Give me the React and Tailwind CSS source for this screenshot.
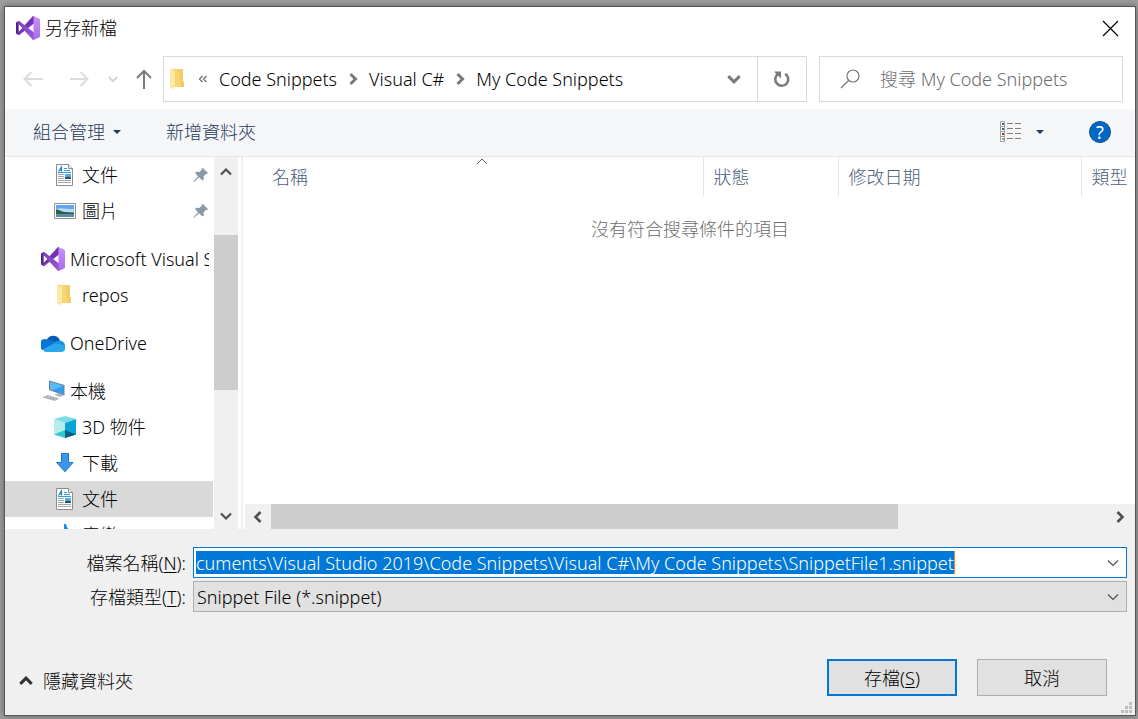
import React from "react";

function VsLogo() {
  return (
    <svg width="24" height="24" viewBox="0 0 24 24" className="shrink-0" aria-hidden="true">
      <defs>
        <linearGradient id="vsPlate" x1="0" y1="0" x2="0" y2="1">
          <stop offset="0" stopColor="#c893fb" />
          <stop offset="1" stopColor="#a66be8" />
        </linearGradient>
        <linearGradient id="vsBand" x1="0" y1="0" x2="1" y2="1">
          <stop offset="0" stopColor="#7a3fb8" />
          <stop offset="1" stopColor="#9a5bd8" />
        </linearGradient>
      </defs>
      <path d="M.6 6Q0 6.300 0 7v10q0 .7.6 1L3 19V5z" fill="#52218a" />
      <path d="M.6 18 3.200 19 18 7.500V0h-1L2.500 15.700z" fill="#7632b5" />
      <path d="M.6 6 3.200 5 18 16.500V24h-1L2.500 8.300z" fill="url(#vsBand)" />
      <path d="M2.600 8.300v7.400L6.200 12z" fill="#fff" />
      <path d="M17.500 0 23 2.500q1 .4 1 1.500v16q0 1.100-1 1.500L17.500 24z" fill="url(#vsPlate)" />
    </svg>
  );
}

function FolderIcon() {
  return (
    <svg width="22" height="22" viewBox="0 0 22 22" className="shrink-0" aria-hidden="true">
      <path d="M3 1h13v12l1 1v5H5z" fill="#f7d673" />
      <path d="M11 1h5v12l1 1v5h-3z" fill="#efc75e" opacity=".6" />
      <path d="M3 1l5 2v14l-1 4.500-4-2z" fill="#ffe9a6" />
    </svg>
  );
}

function DocumentIcon() {
  return (
    <svg width="22" height="22" viewBox="0 0 22 22" className="shrink-0" aria-hidden="true">
      <path d="M2.500.5h12l4 4v17h-16z" fill="#fff" stroke="#8c8c8c" />
      <path d="M14.500.5v4h4" fill="#eee" stroke="#8c8c8c" />
      <path d="M4.500 7.500 7.500 3v4.500M6 6h2" fill="none" stroke="#1583c9" strokeWidth="1.200" />
      <path d="M10 4.500h3M10 6.500h6M4 8.500h13" stroke="#2b9be6" />
      <path d="M4 10.500h6M4 12.500h6M4 14.500h6M4 16.500h13M4 18.500h13" stroke="#a6a6a6" />
      <path d="M11 10h6v5h-6z" fill="#6aa6d6" />
      <path d="M11 13.500l3-1 3 1.200V15h-6z" fill="#24506b" />
    </svg>
  );
}

function PictureIcon() {
  return (
    <svg width="22" height="22" viewBox="0 0 22 22" className="shrink-0" aria-hidden="true">
      <path d="M.5 3.500h21v15H.5z" fill="#fff" stroke="#909497" />
      <path d="M2 5h18v12H2z" fill="#62a8ee" />
      <path d="M2 9c6-2 12 1 18 0v4H2z" fill="#b9dcf6" />
      <path d="M2 9.500c3 0 5 2 9 2.500l9 .5v1.500H2z" fill="#2c5f4c" />
      <path d="M2 14h18v3H2z" fill="#5d8ea3" />
    </svg>
  );
}

function OneDriveIcon() {
  return (
    <svg width="24" height="24" viewBox="0 0 24 24" className="shrink-0" aria-hidden="true">
      <path d="M5.500 9.500a7.200 7.200 0 0 1 13.500 0L14 14z" fill="#0a5cb0" />
      <path d="M6 8.500c2-.3 4 .2 6 1.600l5 3.400L2 19a5.600 5.600 0 0 1 4-10.500z" fill="#0c74d4" />
      <path d="M13 12c2-2 4.500-2.500 6-2.200a5 5 0 0 1 5 4.700L18 16z" fill="#1490e0" />
      <path d="M1.500 18.500 13 12.500l10.800 1.500A4.400 4.400 0 0 1 20 21H5.500Q3 21 1.500 18.500z" fill="#28a8ea" />
    </svg>
  );
}

function ComputerIcon() {
  return (
    <svg width="24" height="24" viewBox="0 0 24 24" className="shrink-0" aria-hidden="true">
      <path d="M8 1.500 23.500 6v10.500L8 11z" fill="#6f7f8c" />
      <path d="M9 2.800 22.500 6.700v8.500L9 10.300z" fill="#2b9df4" />
      <path d="M9 2.800 22.500 6.700 12 11.300 9 10.300z" fill="#5cb8fb" />
      <path d="M13 15.500l5-1.300 5 1.800-4 2z" fill="#aab4bc" />
      <path d="M1 18.200l6-2.200 12 3.300-5 2.700z" fill="#c3cad0" />
      <path d="M3 18.200l11 3M5.500 17.200l11 3" stroke="#8d979f" strokeDasharray="2 1" />
    </svg>
  );
}

function CubeIcon() {
  return (
    <svg width="22" height="22" viewBox="0 0 22 22" className="shrink-0" aria-hidden="true">
      <path d="M0 3 11 0l11 3-11 4z" fill="#7fdbe3" />
      <path d="M0 3l11 4v15L0 18.500z" fill="#b5ecec" />
      <path d="M0 18.500 11 14v8z" fill="#36c7d4" />
      <path d="M22 3 11 7v15l11-3.500z" fill="#0aa3d8" />
      <path d="M22 18.500 11 14v8z" fill="#07607e" />
    </svg>
  );
}

function DownloadIcon() {
  return (
    <svg width="22" height="22" viewBox="0 0 22 22" className="shrink-0" aria-hidden="true">
      <path d="M7.500 1.500h7v9h4.500L11 19.800 2.500 10.500h5z" fill="#3a96e8" stroke="#1f78c8" />
    </svg>
  );
}

function MusicIcon() {
  return (
    <svg width="22" height="22" viewBox="0 0 22 22" className="shrink-0" aria-hidden="true">
      <path d="M10 0h2q1 5 5 7v5q-2-3-5-4v10H6q0-4 4-4z" fill="#1590e8" />
    </svg>
  );
}

function PinIcon() {
  return (
    <svg width="16" height="16" viewBox="0 0 16 16" className="shrink-0" aria-hidden="true">
      <path d="M9.500.8 15.200 6.200 14 7l-1-.2-2.400 2.800.2 3-1.300 1L6 10.200 1 15l-.6-.5L5 9.300 2 6l1-1.200 3.200.2 2.800-2.500-.3-1z" fill="#8a9aa5" />
    </svg>
  );
}

function Chevron({ direction, size = 14, width = 2, color = "#505050" }) {
  const paths = {
    up: "M2 9.500 7 4.500l5 5",
    down: "M2 4.500l5 5 5-5",
    left: "M9.500 2l-5 5 5 5",
    right: "M4.500 2l5 5-5 5",
  };
  return (
    <svg width={size} height={size} viewBox="0 0 14 14" className="shrink-0" aria-hidden="true">
      <path d={paths[direction]} fill="none" stroke={color} strokeWidth={width} />
    </svg>
  );
}

function Arrow({ d, color }) {
  return (
    <svg width="20" height="20" viewBox="0 0 20 20" aria-hidden="true">
      <path d={d} fill="none" stroke={color} strokeWidth="2" />
    </svg>
  );
}

function Caret() {
  return (
    <svg width="8" height="4" viewBox="0 0 8 4" aria-hidden="true">
      <path d="M0 0h8L4 4z" fill="#1e395b" />
    </svg>
  );
}

const groups = [
  [
    { label: "文件", Icon: DocumentIcon, pinned: true },
    { label: "圖片", Icon: PictureIcon, pinned: true },
  ],
  [
    { label: "Microsoft Visual Studio", Icon: VsLogo, root: true },
    { label: "repos", Icon: FolderIcon },
  ],
  [{ label: "OneDrive", Icon: OneDriveIcon, root: true }],
  [
    { label: "本機", Icon: ComputerIcon, root: true },
    { label: "3D 物件", Icon: CubeIcon },
    { label: "下載", Icon: DownloadIcon },
    { label: "文件", Icon: DocumentIcon, selected: true },
    { label: "音樂", Icon: MusicIcon },
  ],
];

function TreeItem({ label, Icon, root, pinned, selected }) {
  return (
    <li>
      <a
        href="#"
        className={
          "flex h-9 items-center overflow-hidden pr-1 text-black " +
          (root ? "gap-[5px] pl-9 " : "gap-[6px] pl-[49px] ") +
          (selected ? "bg-[#d9d9d9]" : "")
        }
      >
        <Icon />
        <span className="min-w-0 flex-1 overflow-hidden whitespace-nowrap">{label}</span>
        {pinned && <PinIcon />}
      </a>
    </li>
  );
}

function TitleBar() {
  return (
    <header className="flex h-[49px] shrink-0 items-center gap-[5px] pb-[7px] pl-[11px] pr-[16px]">
      <VsLogo />
      <h1 className="flex-1">另存新檔</h1>
      <button aria-label="關閉">
        <svg width="17" height="17" viewBox="0 0 17 17" aria-hidden="true">
          <path d="M1 1l15 15M16 1 1 16" stroke="#000" strokeWidth="1.200" />
        </svg>
      </button>
    </header>
  );
}

function AddressRow() {
  return (
    <div className="flex h-[46px] shrink-0 items-stretch pr-[12px]">
      <nav className="flex w-[158px] shrink-0 items-center pl-[18px]">
        <button aria-label="上一頁" className="mr-[26px]">
          <Arrow d="M20 10H2M8.500 3 1.500 10l7 7" color="#dcdcdc" />
        </button>
        <button aria-label="下一頁" className="mr-[18px]">
          <Arrow d="M1 10h17M11.500 3l7 7-7 7" color="#dcdcdc" />
        </button>
        <button aria-label="最近的位置" className="mr-[16px]">
          <Chevron direction="down" size={12} width={2.5} color="#d6d6d6" />
        </button>
        <button aria-label="上一層">
          <Arrow d="M9 20V2M2 9l7-7 7 7" color="#7a7a7a" />
        </button>
      </nav>
      <div className="flex min-w-0 flex-1 items-center border border-[#d9d9d9] pl-[3px]">
        <FolderIcon />
        <span className="ml-[9px] mr-[11px] flex">
          <svg width="10" height="8" viewBox="0 0 10 8" aria-hidden="true">
            <path d="M4.500 1 1.500 4l3 3M8.500 1l-3 3 3 3" fill="none" stroke="#6a6a6a" strokeWidth="1.200" />
          </svg>
        </span>
        <a href="#">Code Snippets</a>
        <span className="mx-[9px]"><Chevron direction="right" width={3} color="#7a7a7a" /></span>
        <a href="#">Visual C#</a>
        <span className="mx-[9px]"><Chevron direction="right" width={3} color="#7a7a7a" /></span>
        <a href="#">My Code Snippets</a>
        <button aria-label="先前的位置" className="ml-auto mr-[15px]">
          <Chevron direction="down" size={16} width={2.6} color="#7a7a7a" />
        </button>
      </div>
      <button aria-label="重新整理" className="flex w-[49px] shrink-0 items-center justify-center border-y border-r border-[#d9d9d9]">
        <svg width="18" height="18" viewBox="0 0 18 18" aria-hidden="true">
          <path d="M12.200 3.800A6.500 6.500 0 1 1 5 4" fill="none" stroke="#7a7a7a" strokeWidth="2.600" />
          <path d="M1 1.500h7v7z" fill="#7a7a7a" />
        </svg>
      </button>
      <label className="ml-[12px] flex w-[304px] shrink-0 items-center border border-[#d9d9d9] pl-[20px]">
        <svg width="20" height="20" viewBox="0 0 20 20" className="shrink-0" aria-hidden="true">
          <circle cx="13" cy="7" r="6" fill="none" stroke="#7a7a7a" strokeWidth="1.200" />
          <path d="M8.800 11.300 1 19" stroke="#7a7a7a" strokeWidth="1.400" />
        </svg>
        <input
          type="search"
          aria-label="搜尋 My Code Snippets"
          placeholder="搜尋 My Code Snippets"
          className="ml-[20px] w-full min-w-0 flex-1 outline-none placeholder:text-[#6d6d6d]"
        />
      </label>
    </div>
  );
}

function Toolbar() {
  return (
    <div className="mt-[7px] flex h-[48px] shrink-0 items-center border-b border-[#e6e6e6] bg-[#f4f6f8] pb-[2px] pl-[28px] pr-[24px] text-[#1e395b]">
      <button className="flex items-center gap-[8px]">
        組合管理 <Caret />
      </button>
      <button className="ml-[45px]">新增資料夾</button>
      <button aria-label="檢視" className="ml-auto flex items-center gap-[15px]">
        <svg width="22" height="22" viewBox="0 0 22 22" aria-hidden="true">
          <path d="M1.500.5h4v20h-4zM1.500 5.500h4M1.500 10.500h4M1.500 15.500h4" fill="#fff" stroke="#a0a0a0" />
          <path d="M3 2h2v2H3zM3 7h2v2H3z" fill="#2f6f9f" />
          <path d="M3 12h2v2H3z" fill="#c03020" />
          <path d="M3 17h2v2H3z" fill="#8aa860" />
          <path d="M8 2.500h6M16 2.500h6M8 7.500h6M16 7.500h6M8 12.500h6M16 12.500h6M8 17.500h6M16 17.500h6" stroke="#808080" />
        </svg>
        <Caret />
      </button>
      <button
        aria-label="說明"
        className="ml-[45px] flex size-[22px] items-center justify-center rounded-full border border-[#0a4f94] bg-[#0067c5] font-normal text-white"
      >
        ?
      </button>
    </div>
  );
}

function Sidebar() {
  return (
    <aside className="flex w-[238px] shrink-0 overflow-hidden border-r-2 border-[#f0f0f0]">
      <ul className="flex min-w-0 flex-1 flex-col gap-3 overflow-hidden">
        {groups.map((items, i) => (
          <li key={i}>
            <ul>
              {items.map((item, j) => (
                <TreeItem key={j} {...item} />
              ))}
            </ul>
          </li>
        ))}
      </ul>
      <div className="ml-px mr-[3px] flex w-6 shrink-0 flex-col items-center bg-[#f0f0f0]">
        <span className="flex h-[78px] items-start pt-[8px]"><Chevron direction="up" width={2.2} /></span>
        <span className="h-[155px] w-full bg-[#cdcdcd]" />
        <span className="mt-auto pb-[6px]"><Chevron direction="down" width={2.2} /></span>
      </div>
    </aside>
  );
}

function FileList() {
  const cell = "border-r border-[#e5e5e5] pl-[10px] text-left font-light";
  return (
    <section className="flex min-w-0 flex-1 flex-col pl-[2px]">
      <div className="pl-[17px]">
        <table className="h-[39px] w-full table-fixed text-[#4c607a]">
          <thead>
            <tr>
              <th scope="col" className={cell + " relative"}>
                名稱
                <span className="absolute inset-x-0 top-0 flex justify-center pt-px">
                  <svg width="12" height="7" viewBox="0 0 12 7" aria-hidden="true">
                    <path d="M1 6l5-5 5 5" fill="none" stroke="#606060" />
                  </svg>
                </span>
              </th>
              <th scope="col" className={cell + " w-[135px]"}>狀態</th>
              <th scope="col" className={cell + " w-[243px]"}>修改日期</th>
              <th scope="col" className="w-[54px] pl-[10px] text-left font-light">類型</th>
            </tr>
          </thead>
        </table>
      </div>
      <p className="mt-[21px] text-center text-[#6d6d6d]">沒有符合搜尋條件的項目</p>
      <div className="mt-auto flex h-[25px] items-center bg-[#f0f0f0] pl-[6px] pr-[8px]">
        <Chevron direction="left" width={2.6} />
        <span className="ml-[6px] h-full w-[627px] bg-[#cdcdcd]" />
        <span className="ml-auto"><Chevron direction="right" width={2.6} /></span>
      </div>
    </section>
  );
}

function Footer() {
  return (
    <footer className="relative shrink-0 bg-[#f0f0f0] pt-[18px] pb-[19px]">
      <div className="grid grid-cols-[181px_1fr] items-center gap-x-[7px] gap-y-[3px] pr-[8px]">
        <label htmlFor="filename" className="text-right">檔案名稱(<u className="underline-offset-2">N</u>):</label>
        <div className="flex h-[31px] min-w-0 items-center border border-[#0078d7] bg-white pl-[2px]">
          <input
            id="filename"
            type="text"
            defaultValue={"cuments\\Visual Studio 2019\\Code Snippets\\Visual C#\\My Code Snippets\\SnippetFile1.snippet"}
            className="field-sizing-content h-[23px] min-w-0 border-r border-[#ff8728] bg-[#0078d7] text-white outline-none"
          />
          <button aria-label="顯示清單" className="ml-auto mr-[6px]">
            <Chevron direction="down" size={14} width={1.2} />
          </button>
        </div>
        <label htmlFor="filetype" className="text-right">存檔類型(<u className="underline-offset-2">T</u>):</label>
        <div className="grid h-[31px] items-center border border-[#adadad] bg-[#e1e1e1]">
          <select id="filetype" className="col-start-1 row-start-1 h-full w-full appearance-none pl-[3px] text-black outline-none">
            <option>Snippet File (*.snippet)</option>
          </select>
          <span className="pointer-events-none col-start-1 row-start-1 mr-[6px] justify-self-end">
            <Chevron direction="down" size={14} width={1.2} />
          </span>
        </div>
      </div>
      <div className="mt-[47px] flex h-[37px] items-center gap-[20px] pl-[13px] pr-[28px]">
        <button className="mr-auto flex items-center gap-[9px] pt-[6px]">
          <Chevron direction="up" size={16} width={2.6} color="#303030" />
          隱藏資料夾
        </button>
        <button className="h-full w-[130px] border-2 border-[#0078d7] bg-[#e1e1e1]">
          存檔(<u className="underline-offset-2">S</u>)
        </button>
        <button className="h-full w-[130px] border border-[#adadad] bg-[#e1e1e1]">取消</button>
      </div>
      <svg width="11" height="11" viewBox="0 0 11 11" className="absolute right-[3px] bottom-[2px]" aria-hidden="true">
        <path d="M8 0h3v3H8zM8 4h3v3H8zM8 8h3v3H8zM4 4h3v3H4zM4 8h3v3H4zM0 8h3v3H0z" fill="#bfbfbf" />
      </svg>
    </footer>
  );
}

export default function App() {
  return (
    <div className="flex h-screen bg-[#a0a0a0] pt-[6px] pr-[2px] pb-[3px] pl-[4px] font-['Noto_Sans','Noto_Sans_CJK_TC',sans-serif] text-[18px] leading-6 font-light text-black">
      <main className="flex min-w-0 flex-1 flex-col border border-[#555555] bg-white shadow-[0_0_8px_rgba(0,0,0,0.4)]">
        <TitleBar />
        <AddressRow />
        <Toolbar />
        <div className="flex min-h-0 flex-1">
          <Sidebar />
          <FileList />
        </div>
        <Footer />
      </main>
    </div>
  );
}
